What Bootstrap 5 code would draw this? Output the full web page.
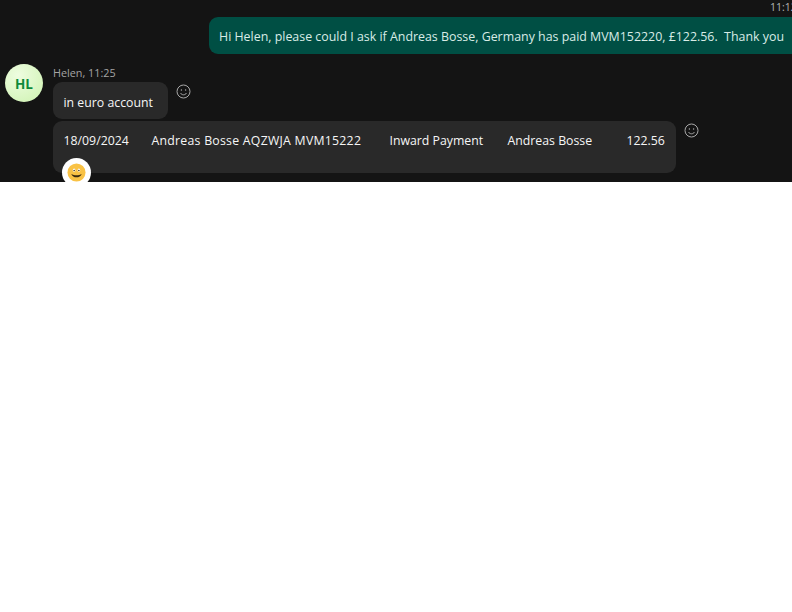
<!DOCTYPE html>
<html lang="en">
<head>
<meta charset="utf-8">
<title>Chat</title>
<link href="https://cdn.jsdelivr.net/npm/bootstrap@5.3.0/dist/css/bootstrap.min.css" rel="stylesheet">
<style>
body { background: #fff; font-family: "Open Sans", "Liberation Sans", sans-serif; }
.chat-pane { height: 182px; background: #141414; overflow: hidden; color: #f6f6f6; font-size: 12.3px; line-height: 17px; }
.out-wrap { margin-left: 209px; width: 700px; }
.out-time { height: 17px; padding-left: 561px; font-size: 10.5px; line-height: 15px; color: #b4b4b4; }
.out-bubble { height: 37px; padding: 11px 10px 9px; background: #004f44; border-radius: 9px; white-space: nowrap; color: #d9ece7; font-size: 12.4px; }
.in-wrap { margin-top: 10px; }
.avatar-disc { width: 38px; height: 38px; margin-left: 5px; padding-top: 2px; background: radial-gradient(circle at 35% 30%, #eefde0, #cdf2b0); color: #0f8a3c; font-weight: 700; font-size: 13.5px; }
.in-col { margin-left: 10px; }
.in-meta { height: 18px; font-size: 10.8px; line-height: 18px; color: #a5a5a5; }
.in-bubble { background: #292929; border-radius: 9px; position: relative; }
.bubble-short { width: 115px; height: 37px; padding: 12px 10.5px 8px; white-space: nowrap; }
.bubble-long { width: 623px; height: 52px; margin-top: 2px; white-space: nowrap; padding: 11px 0 0 10.5px; }
.pay-cell { flex: none; }
.cell-date { width: 88px; }
.cell-ref { width: 238px; letter-spacing: .25px; }
.cell-type { width: 118px; }
.cell-name { width: 119px; }
.cell-amt { width: 38px; }
.react-btn { position: absolute; top: 2px; width: 15px; height: 15px; color: #a8a8a8; }
.react-a { left: 123px; }
.react-b { left: 631px; }
.react-badge { position: absolute; left: 9px; top: 37px; width: 29px; height: 29px; background: #fff; }
</style>
</head>
<body>
<div class="chat-pane">
  <div class="out-wrap">
    <div class="out-time">11:12</div>
    <div class="out-bubble">Hi Helen, please could I ask if Andreas Bosse, Germany has paid MVM152220, £122.56.&nbsp; Thank you</div>
  </div>
  <div class="in-wrap d-flex align-items-start">
    <div class="avatar-disc rounded-circle d-flex align-items-center justify-content-center">HL</div>
    <div class="in-col">
      <div class="in-meta">Helen, 11:25</div>
      <div class="in-bubble bubble-short">in euro account
        <svg class="react-btn react-a" viewBox="0 0 15 15" fill="none" stroke="currentColor" stroke-width="1"><circle cx="7.5" cy="7.5" r="6.5"/><path d="M4.5 9c.8 1.3 1.8 1.8 3 1.8s2.200-.5 3-1.800"/><circle cx="5.400" cy="6" r=".7" fill="currentColor" stroke="none"/><circle cx="9.600" cy="6" r=".7" fill="currentColor" stroke="none"/></svg>
      </div>
      <div class="in-bubble bubble-long d-flex">
        <span class="pay-cell cell-date">18/09/2024</span>
        <span class="pay-cell cell-ref">Andreas Bosse AQZWJA MVM15222</span>
        <span class="pay-cell cell-type">Inward Payment</span>
        <span class="pay-cell cell-name">Andreas Bosse</span>
        <span class="pay-cell cell-amt">122.56</span>
        <svg class="react-btn react-b" viewBox="0 0 15 15" fill="none" stroke="currentColor" stroke-width="1"><circle cx="7.5" cy="7.5" r="6.5"/><path d="M4.5 9c.8 1.3 1.8 1.8 3 1.8s2.200-.5 3-1.800"/><circle cx="5.400" cy="6" r=".7" fill="currentColor" stroke="none"/><circle cx="9.600" cy="6" r=".7" fill="currentColor" stroke="none"/></svg>
        <div class="react-badge rounded-circle d-flex align-items-center justify-content-center">
          <svg width="19" height="19" viewBox="0 0 20 20"><circle cx="10" cy="10" r="9.500" fill="#f9c245"/><ellipse cx="7.500" cy="7.500" rx="1.300" ry="1.600" fill="#fff"/><ellipse cx="12.500" cy="7.500" rx="1.300" ry="1.600" fill="#fff"/><circle cx="7.500" cy="7.800" r=".8" fill="#3a2a10"/><circle cx="12.500" cy="7.800" r=".8" fill="#3a2a10"/><path d="M4.500 11.500c1 2.500 3 3.500 5.500 3.500s4.500-1 5.500-3.500c-1.500 1-3.500 1.300-5.500 1.300s-4-.3-5.500-1.300z" fill="#3a2a10"/></svg>
        </div>
      </div>
    </div>
  </div>
</div>
<script src="https://cdn.jsdelivr.net/npm/bootstrap@5.3.0/dist/js/bootstrap.bundle.min.js"></script>
</body>
</html>
